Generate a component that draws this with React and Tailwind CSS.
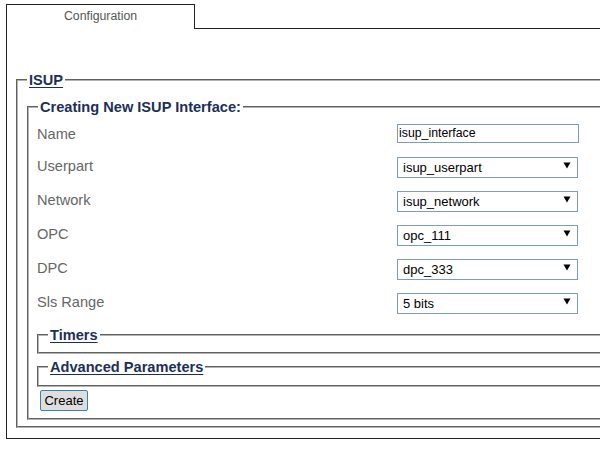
import React, { useState } from 'react';

const selectFields = [
  { label: 'Userpart', name: 'userpart', options: ['isup_userpart'] },
  { label: 'Network', name: 'network', options: ['isup_network'] },
  { label: 'OPC', name: 'opc', options: ['opc_111'] },
  { label: 'DPC', name: 'dpc', options: ['dpc_333'] },
  { label: 'Sls Range', name: 'sls', options: ['5 bits', '4 bits', '8 bits'] },
];

const Arrow = () => (
  <svg width="8" height="7" viewBox="0 0 8 7" className="pointer-events-none absolute right-[7px] top-[7px]">
    <path d="M0.5 0.5 L7.5 0.5 L4 6.5 Z" fill="#000" />
  </svg>
);

const SubFieldset = ({ title, className }) => (
  <fieldset className={`border-2 [border-style:groove] border-[#b4b4b4] pl-[9px] pb-[9px] ${className}`}>
    <legend className="px-[2px] text-[14.6px] leading-[16px] font-bold text-[#1b2f5b] underline underline-offset-2 cursor-pointer">
      {title}
    </legend>
  </fieldset>
);

const App = () => {
  const [name, setName] = useState('isup_interface');
  const [values, setValues] = useState({
    userpart: 'isup_userpart',
    network: 'isup_network',
    opc: 'opc_111',
    dpc: 'dpc_333',
    sls: '5 bits',
  });

  const handleChange = (e) => {
    const { name, value } = e.target;
    setValues((prev) => ({ ...prev, [name]: value }));
  };

  return (
    <div className="w-[600px] h-[452px] overflow-hidden bg-white pt-[4px] pl-[6px] font-['Liberation_Sans',Arial,sans-serif]">
      {/* tab strip */}
      <div className="flex w-[640px]">
        <div className="w-[189px] h-[25px] border-t border-l border-r border-[#222] flex justify-center pt-[4px] text-[12.3px] leading-[15px] text-[#555]">
          Configuration
        </div>
        <div className="flex-1 h-[25px] border-b border-[#222]"></div>
      </div>

      {/* panel */}
      <div className="w-[640px] border-l border-b border-[#222] pt-[43px] pb-[10px] pl-[9px]">
        <fieldset className="border-2 [border-style:groove] border-[#b4b4b4] pl-[9px] pt-[11px] pb-[6px]">
          <legend className="px-[2px] text-[14.6px] leading-[16px] font-bold text-[#1b2f5b] underline underline-offset-2">
            ISUP
          </legend>

          <fieldset className="border-2 [border-style:groove] border-[#b4b4b4] pl-[8px] pt-[1px] pb-[6px]">
            <legend className="ml-[1px] px-[2px] text-[14.6px] leading-[16px] font-bold text-[#1b2f5b]">
              Creating New ISUP Interface:
            </legend>

            <div className="flex items-center h-[34px]">
              <span className="w-[360px] pt-[3px] text-[14.6px] text-[#666]">Name</span>
              <input
                type="text"
                value={name}
                onChange={(e) => setName(e.target.value)}
                className="w-[182px] h-[19px] border border-[#7f9db9] pl-[1px] text-[12.3px] text-black outline-none"
              />
            </div>

            {selectFields.map((f) => (
              <div key={f.name} className="flex items-center h-[34px]">
                <span className="w-[360px] text-[14.6px] text-[#666]">{f.label}</span>
                <div className="relative">
                  <select
                    name={f.name}
                    value={values[f.name]}
                    onChange={handleChange}
                    className="appearance-none w-[181px] h-[21px] border border-[#7f9db9] bg-white pl-[5px] text-[13px] text-black outline-none"
                  >
                    {f.options.map((o) => (
                      <option key={o} value={o}>{o}</option>
                    ))}
                  </select>
                  <Arrow />
                </div>
              </div>
            ))}

            <SubFieldset title="Timers" className="mt-[7px]" />
            <SubFieldset title="Advanced Parameters" className="mt-[5px] pb-[10px]" />

            <button className="mt-[3px] ml-[3px] w-[48px] h-[21px] border border-[#3c7fb1] rounded-[2px] bg-[#dedede] text-[13px] text-black leading-[19px]">
              Create
            </button>
          </fieldset>
        </fieldset>
      </div>
    </div>
  );
};

export default App;
